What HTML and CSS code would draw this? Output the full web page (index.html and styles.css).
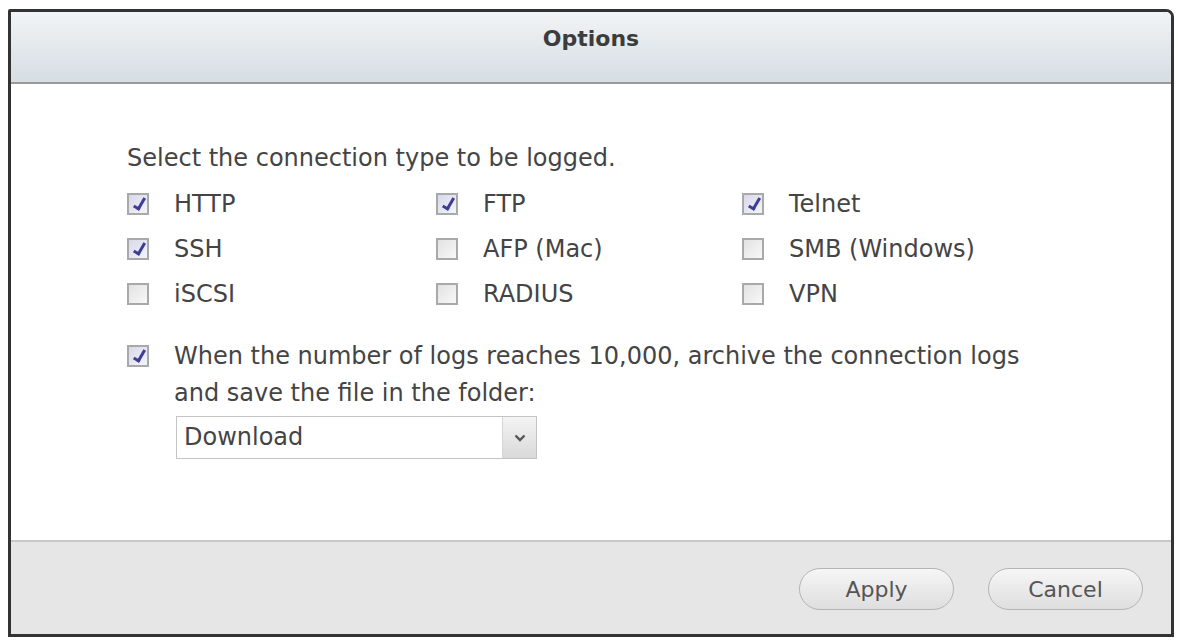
FILE: index.html
```html
<!DOCTYPE html>
<html lang="en">
<head>
    <meta charset="UTF-8">
    <title>Options</title>
    <link rel="stylesheet" href="styles.css">
</head>
<body>
    <div class="dialog">
        <div class="dialog_header">Options</div>

        <div class="dialog_body">
            <p class="intro">Select the connection type to be logged.</p>

            <div class="types">
                <label class="opt"><span class="box checked"></span>HTTP</label>
                <label class="opt"><span class="box checked"></span>FTP</label>
                <label class="opt"><span class="box checked"></span>Telnet</label>
                <label class="opt"><span class="box checked"></span>SSH</label>
                <label class="opt"><span class="box"></span>AFP (Mac)</label>
                <label class="opt"><span class="box"></span>SMB (Windows)</label>
                <label class="opt"><span class="box"></span>iSCSI</label>
                <label class="opt"><span class="box"></span>RADIUS</label>
                <label class="opt"><span class="box"></span>VPN</label>
            </div>

            <div class="archive">
                <span class="box checked"></span>
                <div class="archive_text">
                    <p>When the number of logs reaches 10,000, archive the connection logs<br>and save the file in the folder:</p>
                    <div class="select">
                        <span class="select_value">Download</span>
                        <span class="select_arrow">
                            <svg width="12" height="8" viewBox="0 0 12 8"><path d="M1.5 1.5 L6 6 L10.5 1.5" fill="none" stroke="#555" stroke-width="2.4"/></svg>
                        </span>
                    </div>
                </div>
            </div>
        </div>

        <div class="dialog_footer">
            <button class="btn">Apply</button>
            <button class="btn">Cancel</button>
        </div>
    </div>
</body>
</html>
```

FILE: styles.css
```css
body{
    margin: 0;
    background: white;
    font-family: "DejaVu Sans", Verdana, sans-serif;
    color: #444;
}
.dialog{
    margin: 9px 0 0 8px;
    width: 1160px;
    height: 622px;
    border: 3px solid #333;
    border-radius: 2px 8px 0 0;
    display: flex;
    flex-direction: column;
    overflow: hidden;
}
.dialog_header{
    height: 70px;
    flex-shrink: 0;
    background: linear-gradient(#f1f4f6, #d6dde3);
    border-bottom: 2px solid #9a9a9a;
    text-align: center;
    font-weight: bold;
    font-size: 22px;
    line-height: 54px;
    color: #3c3c3c;
}
.dialog_body{
    flex: 1;
    padding: 62px 0 0 116px;
}
.intro{
    margin: 0;
    font-size: 24px;
    line-height: 24px;
}
.types{
    display: grid;
    grid-template-columns: 309px 306px 300px;
    grid-auto-rows: 45px;
    margin-top: 11px;
}
.opt{
    display: flex;
    align-items: center;
    gap: 24px;
    font-size: 24px;
}
.box{
    width: 22px;
    height: 22px;
    flex-shrink: 0;
    box-sizing: border-box;
    border: 2px solid #a9a9a9;
    background: linear-gradient(135deg, #e2e2e2, #f8f8f8);
    position: relative;
}
.box.checked{
    background: linear-gradient(135deg, #d8d8ea, #f4f4fa);
}
.box.checked::after{
    content: "";
    position: absolute;
    left: 7px;
    top: 1px;
    width: 4px;
    height: 11px;
    border: solid #3d3d96;
    border-width: 0 3px 3px 0;
    transform: rotate(30deg);
}
.opt .box{
    margin-right: 1px;
}
.archive{
    display: flex;
    gap: 25px;
    margin-top: 22px;
}
.archive .box{
    margin-top: 7px;
}
.archive_text p{
    margin: 0;
    font-size: 24px;
    line-height: 37px;
}
.select{
    margin: 4px 0 0 2px;
    width: 361px;
    height: 43px;
    box-sizing: border-box;
    border: 1px solid #c4c4c4;
    display: flex;
    background: white;
}
.select_value{
    flex: 1;
    padding-left: 7px;
    font-size: 24px;
    line-height: 41px;
}
.select_arrow{
    width: 33px;
    border-left: 1px solid #d6d6d6;
    background: linear-gradient(#f4f4f4, #d9d9d9);
    display: flex;
    align-items: center;
    justify-content: center;
}
.dialog_footer{
    height: 92px;
    flex-shrink: 0;
    background: #e6e6e6;
    border-top: 2px solid #c8c8c8;
    display: flex;
    justify-content: flex-end;
    align-items: center;
    gap: 34px;
    padding-right: 28px;
}
.btn{
    width: 155px;
    height: 42px;
    border-radius: 21px;
    border: 1px solid #b4b4b4;
    background: linear-gradient(#f6f6f6, #dedede);
    font-family: "DejaVu Sans", Verdana, sans-serif;
    font-size: 22px;
    color: #555;
    margin-top: 2px;
}
```
